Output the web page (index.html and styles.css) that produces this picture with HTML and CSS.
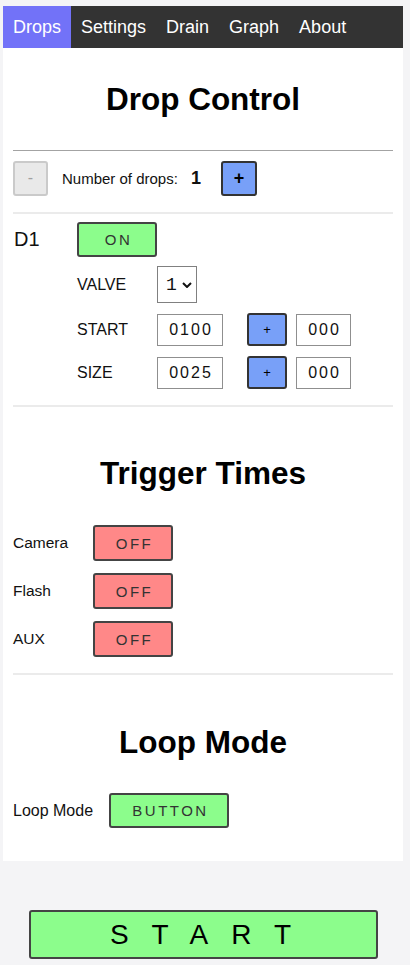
FILE: index.html
```html
<!DOCTYPE html>
<html lang="en">
<head>
<meta charset="utf-8">
<title>Drop Control</title>
<link rel="stylesheet" href="styles.css">
</head>
<body>
<div class="card">
  <nav class="tabs">
    <a class="tab active">Drops</a>
    <a class="tab">Settings</a>
    <a class="tab">Drain</a>
    <a class="tab">Graph</a>
    <a class="tab">About</a>
  </nav>
  <main class="content">
    <h1 class="title">Drop Control</h1>
    <hr class="rule rule-dark">
    <div class="count-row">
      <button class="sq minus">-</button>
      <span class="count-label">Number of drops:</span>
      <span class="count-value">1</span>
      <button class="sq plus">+</button>
    </div>
    <hr class="rule">
    <section class="drop">
      <div class="drop-name">D1</div>
      <div class="drop-body">
        <button class="toggle on">ON</button>
        <div class="field">
          <span class="field-label">VALVE</span>
          <span class="select-wrap">
            <select class="select"><option>1</option><option>2</option></select>
            <svg class="chev" width="10" height="6" viewBox="0 0 10 6"><path d="M1 1 L5 5 L9 1" fill="none" stroke="#111" stroke-width="2"/></svg>
          </span>
        </div>
        <div class="field">
          <span class="field-label">START</span>
          <input class="num wide" value="0100">
          <button class="small-plus">+</button>
          <input class="num narrow" value="000">
        </div>
        <div class="field">
          <span class="field-label">SIZE</span>
          <input class="num wide" value="0025">
          <button class="small-plus">+</button>
          <input class="num narrow" value="000">
        </div>
      </div>
    </section>
    <hr class="rule">
    <h1 class="title t2">Trigger Times</h1>
    <div class="triggers">
      <div class="trig"><span class="trig-label">Camera</span><button class="toggle off">OFF</button></div>
      <div class="trig"><span class="trig-label">Flash</span><button class="toggle off">OFF</button></div>
      <div class="trig"><span class="trig-label">AUX</span><button class="toggle off">OFF</button></div>
    </div>
    <hr class="rule">
    <h1 class="title t3">Loop Mode</h1>
    <div class="loop">
      <span class="loop-label">Loop Mode</span>
      <button class="toggle on loop-btn">BUTTON</button>
    </div>
  </main>
</div>
<div class="start-wrap">
  <button class="start">START</button>
</div>
</body>
</html>
```

FILE: styles.css
```css
* { box-sizing: border-box; }
html, body { margin: 0; padding: 0; }
body {
  background: #f4f4f6;
  font-family: "Liberation Sans", Arial, sans-serif;
  color: #111;
  height: 965px;
  overflow: hidden;
}
.card {
  margin: 6px 0 0 3px;
  width: 400px;
  background: #fff;
  padding-bottom: 33px;
}
.tabs {
  display: flex;
  height: 42px;
  background: #333;
}
.tab {
  display: block;
  padding: 0 10px;
  line-height: 42px;
  font-size: 18px;
  color: #fff;
}
.tab.active { background: #7272f8; }
.content { padding: 0 10px; }
.title {
  margin: 33px 0 0;
  font-size: 31.5px;
  line-height: 36px;
  font-weight: bold;
  text-align: center;
  color: #000;
}
.t2 { margin-top: 48px; }
.t3 { margin-top: 49px; }
.rule {
  margin: 16px 0 0;
  border: 0;
  height: 2px;
  background: #ebebeb;
}
.rule-dark {
  margin-top: 33px;
  height: 1px;
  background: #a3a3a3;
}
.count-row {
  display: flex;
  align-items: center;
  margin-top: 9px;
  height: 36px;
}
.sq {
  width: 35px;
  height: 35px;
  border-radius: 3px;
  font-family: "Liberation Sans", Arial, sans-serif;
  font-size: 16px;
  padding: 0;
}
.minus {
  background: #e9e9e9;
  border: 2px solid #cacaca;
  color: #a0a0a0;
}
.plus {
  width: 36px;
  background: #78a0f8;
  border: 2px solid #333;
  color: #000;
  font-weight: bold;
  font-size: 18px;
}
.count-label { margin-left: 14px; font-size: 15px; color: #111; }
.count-value { margin-left: 13px; font-size: 18px; font-weight: bold; }
.count-value + .plus { margin-left: 20px; }
.drop {
  display: flex;
  margin-top: 8px;
}
.drop-name {
  width: 64px;
  height: 35px;
  line-height: 35px;
  font-size: 20px;
  padding-left: 1px;
}
.drop-body {
  display: flex;
  flex-direction: column;
  gap: 10px;
  align-items: flex-start;
}
.toggle {
  width: 80px;
  height: 36px;
  border: 2px solid #444;
  border-radius: 3px;
  font-family: "Liberation Sans", Arial, sans-serif;
  font-size: 15px;
  letter-spacing: 2.5px;
  color: #333;
  padding: 0 0 0 3px;
}
.on { background: #8cfd8c; }
.off { background: #ff8888; }
.drop-body > .toggle { height: 35px; margin-bottom: -1px; }
.field {
  display: flex;
  align-items: center;
}
.field-label {
  width: 80px;
  font-size: 16px;
  color: #111;
}
.select-wrap {
  position: relative;
  display: block;
  width: 40px;
  height: 37px;
}
.select {
  appearance: none;
  -webkit-appearance: none;
  width: 40px;
  height: 37px;
  border: 1px solid #808080;
  border-radius: 0;
  background: #fff;
  font-family: "Liberation Mono", "DejaVu Sans Mono", monospace;
  font-size: 18px;
  padding: 0 0 0 8px;
  color: #111;
}
.chev {
  position: absolute;
  left: 25px;
  top: 16px;
}
.num {
  height: 32px;
  border: 1px solid #8f8f8f;
  border-radius: 0;
  font-family: "Liberation Sans", Arial, sans-serif;
  font-size: 16px;
  letter-spacing: 2px;
  text-align: center;
  color: #111;
  padding: 0 0 0 2px;
  outline: none;
}
.wide { width: 66px; }
.narrow { width: 55px; margin-left: 9px; }
.small-plus {
  margin-left: 24px;
  width: 40px;
  height: 33px;
  background: #78a0f8;
  border: 2px solid #333;
  border-radius: 3px;
  font-size: 13px;
  color: #000;
  padding: 0;
}
.triggers {
  margin-top: 34px;
  display: flex;
  flex-direction: column;
  gap: 12px;
}
.trig {
  display: flex;
  align-items: center;
}
.trig-label {
  width: 80px;
  font-size: 15.5px;
}
.loop {
  display: flex;
  align-items: center;
  margin-top: 33px;
}
.loop-label {
  width: 96px;
  font-size: 16px;
}
.loop-btn {
  width: 120px;
  height: 35px;
}
.start-wrap {
  padding: 49px 0 0 29px;
}
.start {
  width: 349px;
  height: 49px;
  background: #8cfd8c;
  border: 2px solid #444;
  border-radius: 3px;
  font-family: "Liberation Sans", Arial, sans-serif;
  font-size: 28px;
  letter-spacing: 23px;
  color: #000;
  padding: 0 0 0 17px;
}
```
